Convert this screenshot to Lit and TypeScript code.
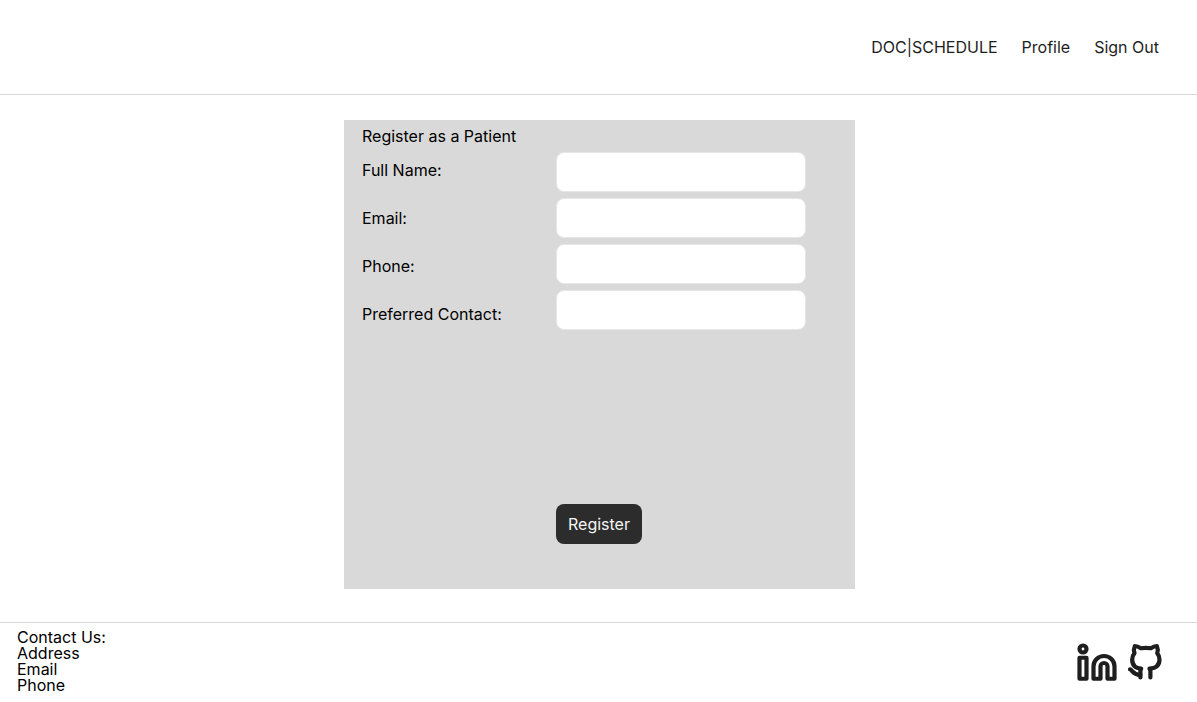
import { LitElement, html, css } from "lit";
import { customElement } from "lit/decorators.js";

interface Field {
  id: string;
  label: string;
  type: string;
}

const FIELDS: Field[] = [
  { id: "full-name", label: "Full Name:", type: "text" },
  { id: "email", label: "Email:", type: "email" },
  { id: "phone", label: "Phone:", type: "tel" },
  { id: "preferred-contact", label: "Preferred Contact:", type: "text" },
];

@customElement("site-header")
export class SiteHeader extends LitElement {
  static styles = css`
    :host {
      display: block;
      border-bottom: 1px solid #d9d9d9;
    }
    .nav {
      display: flex;
      justify-content: flex-end;
      gap: 24px;
      padding: 35px 38px;
      line-height: 24px;
    }
    .link {
      color: #1e1e1e;
      text-decoration: none;
    }
  `;

  render() {
    return html`
      <nav class="nav">
        <a class="link" href="#home">DOC|SCHEDULE</a>
        <a class="link" href="#profile">Profile</a>
        <a class="link" href="#sign-out">Sign Out</a>
      </nav>
    `;
  }
}

@customElement("register-form")
export class RegisterForm extends LitElement {
  static styles = css`
    :host {
      display: block;
      width: 100%;
      max-width: 511px;
    }
    .panel {
      display: flex;
      flex-direction: column;
      box-sizing: border-box;
      padding: 8px 18px 45px;
      background: #d9d9d9;
      color: #000;
    }
    .title {
      margin: 0;
      font-size: 16px;
      font-weight: 400;
      line-height: 16px;
    }
    .columns {
      display: grid;
      grid-template-columns: 194px minmax(0, 250px);
      align-items: start;
      padding-top: 8px;
    }
    .labels {
      display: flex;
      flex-direction: column;
      gap: 32px;
      padding-top: 10px;
      line-height: 16px;
    }
    .inputs {
      display: flex;
      flex-direction: column;
      gap: 6px;
    }
    .input {
      box-sizing: border-box;
      width: 100%;
      height: 40px;
      padding: 0 16px;
      border: 1px solid #e6e6e6;
      border-radius: 8px;
      background: #fff;
      color: #1e1e1e;
      font: inherit;
    }
    .actions {
      padding: 174px 0 0 194px;
    }
    .button {
      display: block;
      height: 40px;
      padding: 0 12px;
      border: 0;
      border-radius: 8px;
      background: #2c2c2c;
      color: #f5f5f5;
      font: inherit;
      line-height: 16px;
      cursor: pointer;
    }
  `;

  private onSubmit(event: Event) {
    event.preventDefault();
  }

  render() {
    return html`
      <form class="panel" @submit=${this.onSubmit}>
        <h1 class="title">Register as a Patient</h1>
        <div class="columns">
          <div class="labels">
            ${FIELDS.map((f) => html`<label for=${f.id}>${f.label}</label>`)}
          </div>
          <div class="inputs">
            ${FIELDS.map(
              (f) => html`<input class="input" id=${f.id} name=${f.id} type=${f.type} />`
            )}
          </div>
        </div>
        <div class="actions">
          <button class="button" type="submit">Register</button>
        </div>
      </form>
    `;
  }
}

@customElement("site-footer")
export class SiteFooter extends LitElement {
  static styles = css`
    :host {
      display: flex;
      justify-content: space-between;
      align-items: flex-start;
      padding: 6px 31px 9px 17px;
      border-top: 1px solid #d9d9d9;
      color: #000;
    }
    .contact {
      margin: 0;
      font-style: normal;
      line-height: 16px;
    }
    .line {
      display: block;
    }
    .social {
      display: flex;
      align-items: flex-end;
      gap: 6px;
      padding-top: 11px;
    }
    .icon-link {
      display: block;
      color: #1e1e1e;
    }
    .icon {
      display: block;
      width: 42px;
      fill: none;
      stroke: currentColor;
      stroke-linecap: round;
      stroke-linejoin: round;
    }
    .linkedin {
      height: 42px;
      stroke-width: 2.4;
    }
    .github {
      height: 44px;
      stroke-width: 4.2;
    }
  `;

  render() {
    return html`
      <address class="contact">
        <span class="line">Contact Us:</span>
        <span class="line">Address</span>
        <span class="line">Email</span>
        <span class="line">Phone</span>
      </address>
      <div class="social">
        <a class="icon-link" href="#linkedin" aria-label="LinkedIn">
          <svg class="icon linkedin" viewBox="0 0 24 24" aria-hidden="true">
            <path
              d="M16 8a6 6 0 0 1 6 6v7h-4v-7a2 2 0 0 0-4 0v7h-4v-7a6 6 0 0 1 6-6z"
            />
            <path d="M2 9h4v12H2z" />
            <circle cx="4" cy="4" r="2" />
          </svg>
        </a>
        <a class="icon-link" href="#github" aria-label="GitHub">
          <svg class="icon github" viewBox="0 0 42 44" aria-hidden="true">
            <path
              d="M16.400 37.500V30.500L17.200 28.600C11.500 28.200 8.200 25 8.200 19.500C8.200 17 9 15 10.500 13.200C9.700 10.800 9.900 8 10.800 6C13 6 14.800 6.800 16.800 8.200Q21.800 7.400 26.800 8.200C28.800 6.800 30.700 6 32.900 6C33.800 8 34 10.800 33.200 13.200C34.700 15 35.500 17 35.500 19.500C35.500 25 32.200 28.200 25.500 28.600L26.400 30.500V37.500"
            />
            <path d="M6 29.300C8.500 30 8.800 35 16.400 34.800" />
          </svg>
        </a>
      </div>
    `;
  }
}

@customElement("app-root")
export class AppRoot extends LitElement {
  static styles = css`
    :host {
      display: flex;
      flex-direction: column;
      min-height: 100vh;
      background: #fff;
      font-family: Inter, "Liberation Sans", sans-serif;
      font-size: 16px;
    }
    .main {
      display: flex;
      flex: 1;
      justify-content: center;
      align-items: flex-start;
      padding: 25px 16px 33px 18px;
    }
  `;

  render() {
    return html`
      <site-header></site-header>
      <main class="main"><register-form></register-form></main>
      <site-footer></site-footer>
    `;
  }
}
